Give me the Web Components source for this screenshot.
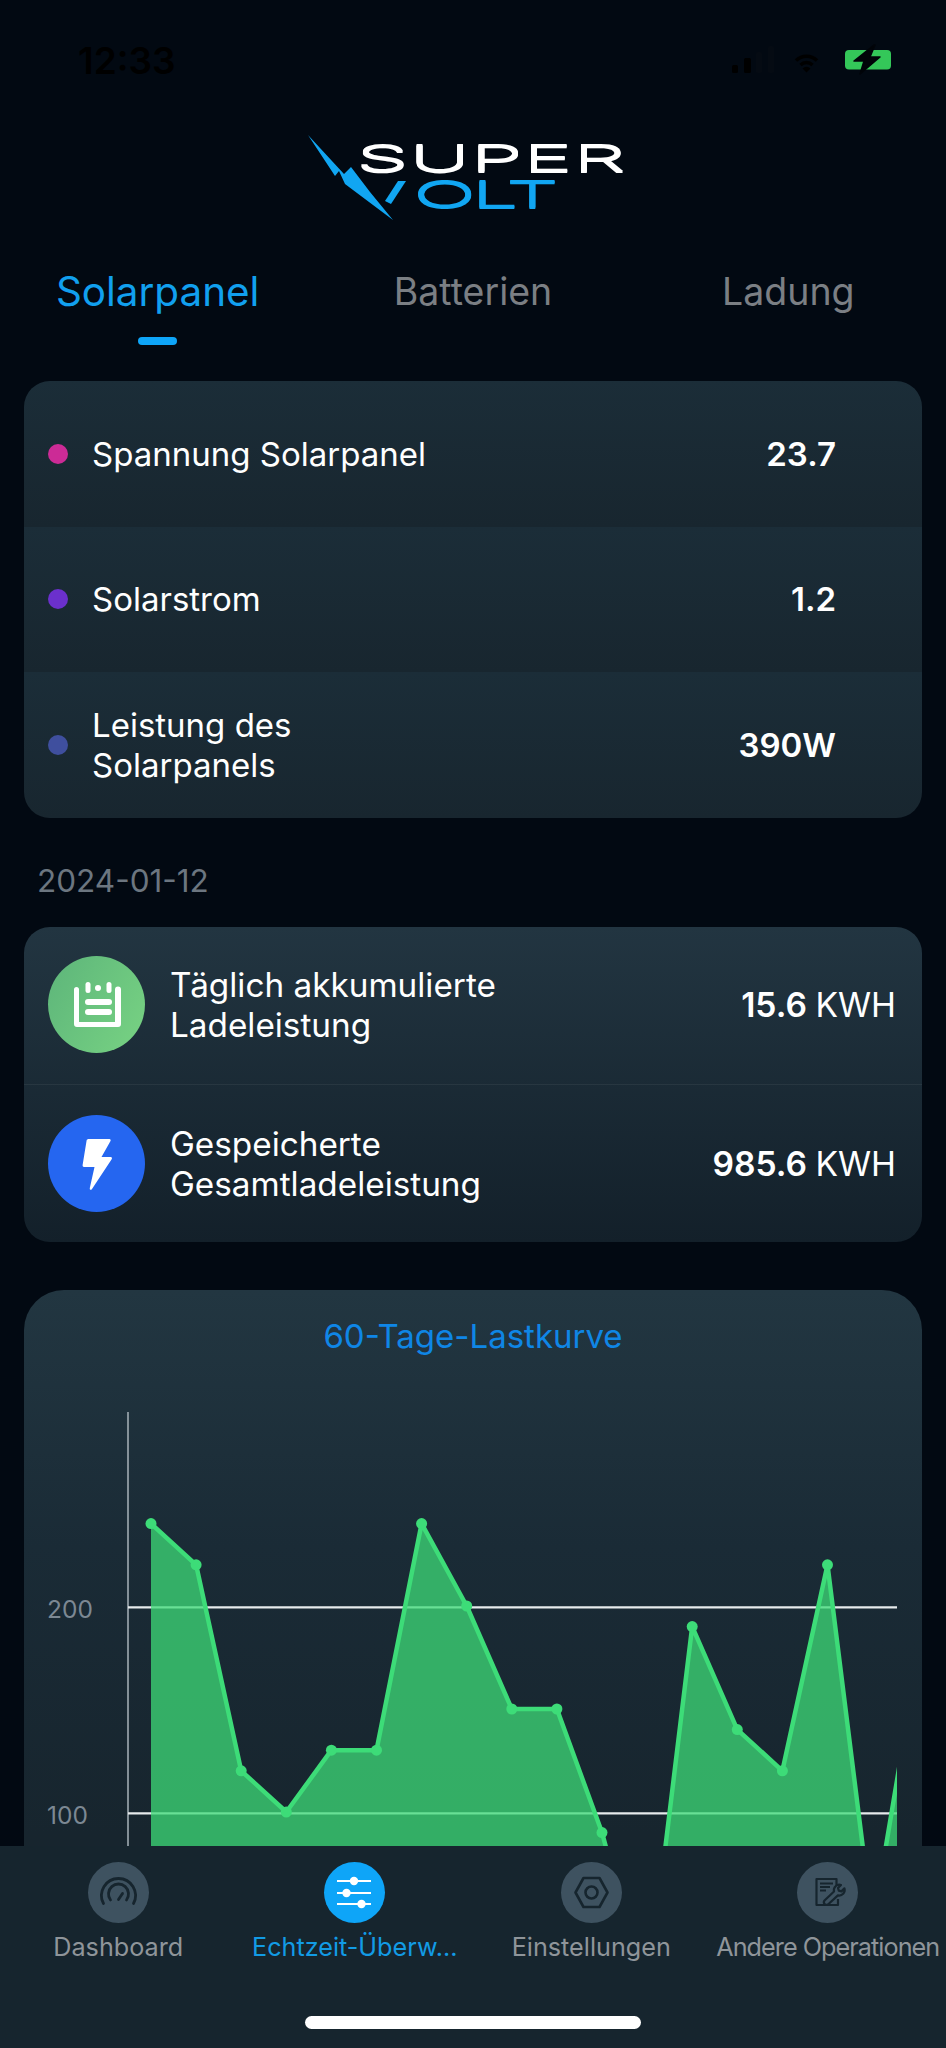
<!DOCTYPE html>
<html lang="de">
<head>
<meta charset="utf-8">
<title>Super Volt</title>
<style>
  html, body { margin: 0; padding: 0; }
  body {
    width: 946px;
    height: 2048px;
    overflow: hidden;
    background: #020912;
    font-family: Inter, "Liberation Sans", sans-serif;
    color: #fff;
    display: flex;
    flex-direction: column;
  }
  app-main { flex: 1; min-height: 0; }
</style>
</head>
<body>
<app-main>
  <status-bar time="12:33"></status-bar>
  <brand-logo></brand-logo>
  <tab-strip tabs="Solarpanel,Batterien,Ladung" active="0"></tab-strip>

  <metric-panel>
    <metric-row color="#cc2b96" value="23.7">Spannung Solarpanel</metric-row>
    <metric-row color="#6b30cc" value="1.2">Solarstrom</metric-row>
    <metric-row color="#3f4f9e" value="390W">Leistung des<br>Solarpanels</metric-row>
  </metric-panel>

  <date-label>2024-01-12</date-label>

  <energy-panel>
    <energy-row icon="note" value="15.6">Täglich akkumulierte<br>Ladeleistung</energy-row>
    <energy-row icon="bolt" value="985.6">Gespeicherte<br>Gesamtladeleistung</energy-row>
  </energy-panel>

  <chart-card title-text="60-Tage-Lastkurve" data="240,220,120,100,130,130,240,200,150,150,90,10,190,140,120,220,45,175"></chart-card>
</app-main>
<bottom-nav active="1"></bottom-nav>

<script>
function shadow(el, html) {
  el.attachShadow({ mode: "open" }).innerHTML = html;
}

class AppMain extends HTMLElement {
  constructor() {
    super();
    shadow(this, `<style>:host { display: block; overflow: hidden; }</style><slot></slot>`);
  }
}

class StatusBar extends HTMLElement {
  connectedCallback() {
    shadow(this, `
      <style>
        :host { display: flex; height: 120px; align-items: center; justify-content: space-between; padding: 0 47px 0 78px; box-sizing: border-box; }
        .time { font-size: 37px; font-weight: 600; color: #000; }
        svg { display: block; }
      </style>
      <div class="time">${this.getAttribute("time")}</div>
      <svg width="180" height="40" viewBox="720 40 180 40">
        <rect x="733" y="65" width="6" height="8" rx="1.5" fill="#000"/>
        <rect x="745" y="58" width="7" height="15" rx="1.5" fill="#000"/>
        <rect x="757" y="52" width="6" height="21" rx="1.5" fill="#050b13"/>
        <rect x="769" y="46" width="6" height="27" rx="1.5" fill="#050b13"/>
        <g fill="none" stroke="#000" stroke-width="3.4">
          <path d="M797 60.5a15 15 0 0 1 21 0"/>
          <path d="M801.5 65a8.6 8.6 0 0 1 12 0"/>
        </g>
        <path d="M803.5 68.5l4 4 4-4a5.6 5.6 0 0 0-8 0z" fill="#000"/>
        <rect x="846" y="50" width="46" height="19.500" rx="4" fill="#34c759"/>
        <path d="M875 45L855 61h10l-4 13 20-17h-10l5-12z" fill="#010409" stroke="#010409" stroke-width="1.500" stroke-linejoin="round"/>
      </svg>`);
  }
}

class BrandLogo extends HTMLElement {
  connectedCallback() {
    // one text node on two lines, stretched to the wide letters of the logo
    const font = '300 37px Inter';
    const ctx = document.createElement("canvas").getContext("2d");
    ctx.font = font;
    const scale = 270 / ctx.measureText("SUPER").width;
    const spacing = (141 / scale - ctx.measureText("OLT").width) / 3;
    const pad = 57 / scale;
    shadow(this, `
      <style>
        :host { display: block; position: relative; height: 110px; box-sizing: border-box; padding: 21px 0 0 356px; }
        svg { display: block; position: absolute; left: 0; top: 0; }
        .words {
          width: 300px; font: ${font}; line-height: 36px; white-space: pre-line;
          padding-left: ${pad}px; text-indent: ${-pad}px; letter-spacing: ${spacing}px;
          transform: scaleX(${scale}); transform-origin: 0 0;
          color: #11a6f2; text-shadow: 0 1.400px 0 #11a6f2, 0 -1.400px 0 #11a6f2;
        }
        .words::first-line { color: #fff; letter-spacing: 0; text-shadow: 0 1.400px 0 #fff, 0 -1.400px 0 #fff; }
      </style>
      <svg width="946" height="110" viewBox="0 120 946 110" aria-hidden="true">
        <path d="M308 135L344 174 351 167 370 192 393 220 345 184 339 171 335 176z" fill="#11a6f2"/>
        <path d="M398 181h8l-15 23-6-3z" fill="#11a6f2"/>
      </svg>
      <div class="words">SUPER
OLT</div>`);
  }
}

class TabStrip extends HTMLElement {
  connectedCallback() {
    const active = parseInt(this.getAttribute("active")) || 0;
    const items = this.getAttribute("tabs").split(",").map((t, i) => `
      <div class="tab ${i === active ? "on" : ""}"><span>${t}</span><i></i></div>`).join("");
    shadow(this, `
      <style>
        :host { display: grid; grid-template-columns: repeat(3, 1fr); height: 115px; margin-bottom: 36px; }
        .tab { display: flex; flex-direction: column; align-items: center; padding-top: 39px; font-size: 37.500px; line-height: 46px; color: #7b7f84; }
        i { display: block; width: 39px; height: 8px; border-radius: 4px; margin-top: 22px; }
        .on { color: #11a0ef; font-size: 40.400px; }
        .on i { background: #0ea5f8; }
      </style>${items}`);
  }
}

class MetricPanel extends HTMLElement {
  constructor() {
    super();
    shadow(this, `
      <style>
        :host { display: grid; grid-auto-rows: 1fr; height: 437px; margin: 0 24px; border-radius: 26px; overflow: hidden; }
      </style><slot></slot>`);
  }
}

class MetricRow extends HTMLElement {
  connectedCallback() {
    shadow(this, `
      <style>
        :host { display: flex; align-items: center; padding: 0 86px 0 24px; background: linear-gradient(#1b2d38, #18262f); }
        .dot { width: 20px; height: 20px; border-radius: 50%; background: ${this.getAttribute("color")}; margin-right: 24px; flex: none; }
        .label { flex: 1; font-size: 33px; line-height: 40px; color: #fff; }
        .value { font-size: 33px; font-weight: 600; color: #fff; }
      </style>
      <div class="dot"></div>
      <div class="label"><slot></slot></div>
      <div class="value">${this.getAttribute("value")}</div>`);
  }
}

class DateLabel extends HTMLElement {
  constructor() {
    super();
    shadow(this, `
      <style>
        :host { display: block; height: 109px; padding: 45px 0 0 37px; box-sizing: border-box; font-size: 31.500px; line-height: 36px; color: #6c7680; }
      </style><slot></slot>`);
  }
}

class EnergyPanel extends HTMLElement {
  constructor() {
    super();
    shadow(this, `
      <style>
        :host { display: grid; grid-auto-rows: 1fr; height: 315px; margin: 0 24px 48px; border-radius: 26px; overflow: hidden; background: linear-gradient(#223541, #13202a); }
        ::slotted(energy-row:first-child) { border-bottom: 1px solid rgba(255,255,255,.06); padding-bottom: 1px; }
      </style><slot></slot>`);
  }
}

const ENERGY_ICONS = {
  note: `<div class="ic" style="background:linear-gradient(120deg,#5db57a,#78d383)">
    <svg width="97" height="97" viewBox="0 0 97 97" fill="#fff">
      <path d="M26 33.500a2.500 2.500 0 0 1 5 0V66h36V33.500a3 3 0 0 1 6 0V68a3 3 0 0 1-3 3H29a3 3 0 0 1-3-3z"/>
      <rect x="37.500" y="26" width="5" height="11" rx="2.500"/><circle cx="50" cy="32" r="3"/><rect x="58.500" y="26" width="5" height="11" rx="2.500"/>
      <rect x="37" y="43" width="27" height="6" rx="3"/><rect x="37" y="53" width="27" height="6" rx="3"/>
    </svg></div>`,
  bolt: `<div class="ic" style="background:#2566f0">
    <svg width="97" height="97" viewBox="0 0 97 97">
      <path d="M41 24h20.500c1 0 1.500 1 1 2L53.500 42h9c1.500 0 2 1 1 2.500L44 74c-1 1.500-2.500 1-2.200-1l4.700-21H36c-1 0-1.500-.8-1.400-2l4-24.500c.2-1 1-1.500 2.400-1.500z" fill="#fff"/>
    </svg></div>`
};

class EnergyRow extends HTMLElement {
  connectedCallback() {
    shadow(this, `
      <style>
        :host { display: flex; align-items: center; padding: 0 26px 0 24px; margin: 0; box-sizing: border-box; }
        .ic { width: 97px; height: 97px; border-radius: 50%; flex: none; margin-right: 25px; }
        svg { display: block; }
        .label { flex: 1; font-size: 33.300px; line-height: 40px; color: #fff; padding-top: 1px; }
        .value { font-size: 33.600px; font-weight: 600; color: #fff; white-space: nowrap; }
        .value span { font-weight: 400; }
      </style>
      ${ENERGY_ICONS[this.getAttribute("icon")]}
      <div class="label"><slot></slot></div>
      <div class="value">${this.getAttribute("value")} <span>KWH</span></div>`);
  }
}

class ChartCard extends HTMLElement {
  connectedCallback() {
    const values = this.getAttribute("data").split(",").map(Number);
    const pts = values.map((v, i) => [151 + i * 45.1, 2018 - 2.06 * v]);
    const line = pts.map((p) => p.join(",")).join(" ");
    const last = pts[pts.length - 1];
    const area = `151,2000 ${line} ${last[0]},2000`;
    const dots = pts.map((p) => `<circle cx="${p[0]}" cy="${p[1]}" r="5.500"/>`).join("");
    shadow(this, `
      <style>
        :host { display: block; margin: 0 24px; height: 640px; border-radius: 40px 40px 0 0; background: linear-gradient(#223641, #1a2b36 40%, #17252e 85%); }
        h2 { margin: 0; padding-top: 26px; height: 65px; box-sizing: border-box; text-align: center; font-size: 33px; line-height: 40px; font-weight: 400; color: #0f86e6; }
        svg { display: block; }
        text { font-family: Inter, "Liberation Sans", sans-serif; font-size: 24.500px; fill: #7c8893; }
      </style>
      <h2>${this.getAttribute("title-text")}</h2>
      <svg width="898" height="545" viewBox="24 1355 898 545">
        <defs><clipPath id="plot"><rect x="128" y="1400" width="769" height="500"/></clipPath></defs>
        <text x="47" y="1618">200</text>
        <text x="47" y="1824">100</text>
        <path d="M128 1412V1900" stroke="#a9b3ba" stroke-width="1.500"/>
        <path d="M128 1607.400H897M128 1813.400H897" stroke="#e6eaec" stroke-width="2.200"/>
        <g clip-path="url(#plot)">
          <polygon points="${area}" fill="rgba(61,220,120,.75)"/>
          <polyline points="${line}" fill="none" stroke="#3ddc78" stroke-width="4.500" stroke-linejoin="round"/>
          <g fill="#3ddc78">${dots}</g>
        </g>
      </svg>`);
  }
}

const NAV_ICONS = [
  `<g fill="none" stroke="#16252e" stroke-width="2.800" stroke-linecap="round">
    <path d="M15.500 41.500a17 17 0 1 1 30 0"/>
    <path d="M22.500 38a10 10 0 1 1 16 0"/>
    <path d="M30.500 37.500l4-6"/>
  </g>`,
  `<g stroke="#fff" stroke-width="2.200" fill="#fff">
    <path d="M13 19H47M13 31H47M13 42H47" fill="none"/>
    <circle cx="30" cy="19" r="4.200" stroke="none"/>
    <circle cx="22.500" cy="31" r="4.200" stroke="none"/>
    <circle cx="37.500" cy="42" r="4.200" stroke="none"/>
  </g>`,
  `<g fill="none" stroke="#16252e" stroke-width="2.600" stroke-linejoin="round">
    <path d="M14.500 30.500L22.500 16H38.500L46.500 30.500 38.500 45H22.500z"/>
    <circle cx="30.500" cy="30.500" r="6"/>
  </g>`,
  `<g fill="none" stroke="#16252e" stroke-width="2.200" stroke-linejoin="round">
    <path d="M39.500 25V17H19.500V43H41V37"/>
    <path d="M23 21.500H36M23 25H33M23 28.500H29"/>
    <path d="M27.500 38.500L37 29.500a5.500 5.500 0 0 1 7-6.500l-3 3 .8 2.600 2.600.8 3-3a5.500 5.500 0 0 1-6.500 7L31 42.500a2.700 2.700 0 0 1-3.500-4z" fill="#3e5260"/>
  </g>`
];

class BottomNav extends HTMLElement {
  connectedCallback() {
    const active = parseInt(this.getAttribute("active")) || 0;
    const labels = ["Dashboard", "Echtzeit-Überw...", "Einstellungen", "Andere Operationen"];
    const items = labels.map((label, i) => `
      <div class="item ${i === active ? "on" : ""}">
        <svg class="ic" width="61" height="61" viewBox="0 0 61 61">${NAV_ICONS[i]}</svg>
        <span class="${i === 3 ? "tight" : ""}">${label}</span>
      </div>`).join("");
    shadow(this, `
      <style>
        :host { display: flex; flex-direction: column; height: 202px; flex: none; background: #16252e; }
        .items { display: grid; grid-template-columns: repeat(4, 1fr); padding-top: 16px; }
        .item { display: flex; flex-direction: column; align-items: center; color: #8f959a; font-size: 25.200px; line-height: 30px; white-space: nowrap; min-width: 0; }
        .ic { display: block; border-radius: 50%; background: #3e5260; margin-bottom: 9px; }
        .tight { letter-spacing: -.95px; }
        .on { color: #129be5; }
        .on .ic { background: #0ea5f8; }
        .home { width: 336px; height: 13px; border-radius: 7px; background: #fff; align-self: center; margin-top: 54px; }
      </style>
      <div class="items">${items}</div>
      <div class="home"></div>`);
  }
}

customElements.define("app-main", AppMain);
customElements.define("status-bar", StatusBar);
customElements.define("brand-logo", BrandLogo);
customElements.define("tab-strip", TabStrip);
customElements.define("metric-panel", MetricPanel);
customElements.define("metric-row", MetricRow);
customElements.define("date-label", DateLabel);
customElements.define("energy-panel", EnergyPanel);
customElements.define("energy-row", EnergyRow);
customElements.define("chart-card", ChartCard);
customElements.define("bottom-nav", BottomNav);
</script>
</body>
</html>
